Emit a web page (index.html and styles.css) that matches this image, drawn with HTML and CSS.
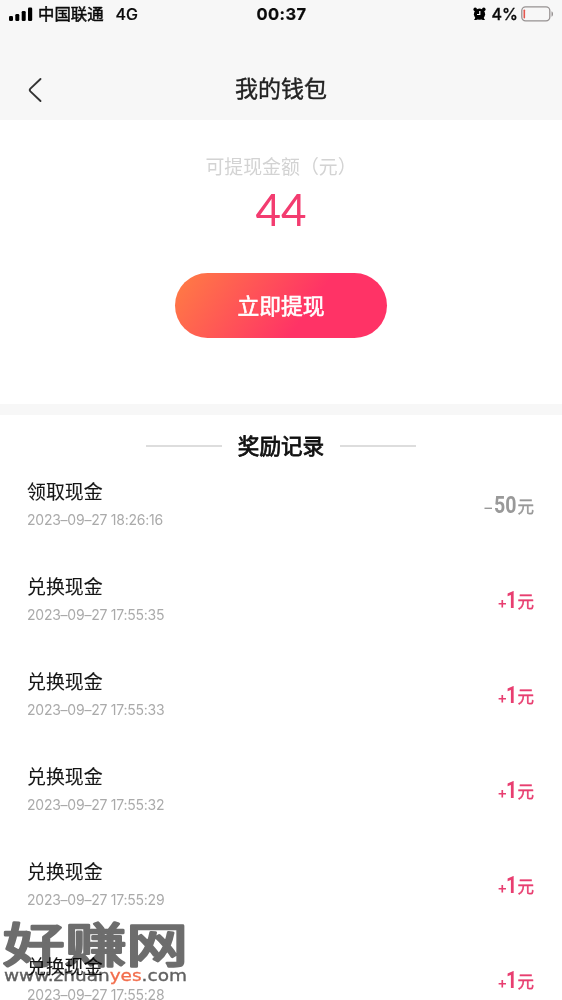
FILE: index.html
```html
<!DOCTYPE html>
<html lang="zh-CN">
<head>
<meta charset="utf-8">
<title>我的钱包</title>
<link rel="stylesheet" href="styles.css">
</head>
<body>
<div class="screen">
  <header class="top">
    <div class="status">
      <div class="carrier">
        <svg class="signal" width="24" height="14" viewBox="0 0 24 14"><rect x="0" y="9" width="4" height="5" rx="1.3"/><rect x="6.3" y="7" width="4" height="7" rx="1.3"/><rect x="12.7" y="4" width="4" height="10" rx="1.3"/><rect x="19" y="0.5" width="4.2" height="13.5" rx="1.3"/></svg>
        <span class="operator">中国联通</span><span class="network">4G</span>
      </div>
      <span class="clock">00:37</span>
      <div class="power">
        <svg class="alarm" width="13" height="14" viewBox="0 0 13 14"><circle cx="6.5" cy="7.2" r="5.6"/><circle cx="2.2" cy="2.4" r="1.8"/><circle cx="10.8" cy="2.4" r="1.8"/><path d="M2.5 10.5 1 13h2.4l1.2-1zM10.5 10.5 12 13H9.6l-1.2-1z"/><path class="hands" d="M6.8 4v3.5H4"/></svg>
        <span class="percent">4%</span>
        <svg class="battery" width="33" height="16" viewBox="0 0 33 16"><rect class="shell" x=".8" y=".8" width="28" height="14" rx="3.8"/><rect class="charge" x="2.5" y="3.5" width="1.6" height="9" rx=".8"/><path class="cap" d="M30.5 5.2c2 .7 2 4.8 0 5.5z"/></svg>
      </div>
    </div>
    <nav class="nav">
      <svg class="back" width="14" height="26" viewBox="0 0 14 26"><path d="M12.5 2 2.4 11.6q-1.4 1.4 0 2.8L12.5 24"/></svg>
      <h1 class="title">我的钱包</h1>
    </nav>
  </header>
  <section class="balance">
    <div class="label">可提现金额（元）</div>
    <div class="amount">44</div>
    <button class="withdraw">立即提现</button>
  </section>
  <section class="records">
    <h2 class="heading">奖励记录</h2>
    <div class="row"><div class="info"><div class="name">领取现金</div><div class="time">2023–09–27 18:26:16</div></div><div class="money spent"><span class="sign">–</span><span class="value">50</span><span class="unit">元</span></div></div>
    <div class="row"><div class="info"><div class="name">兑换现金</div><div class="time">2023–09–27 17:55:35</div></div><div class="money"><span class="sign">+</span><span class="value">1</span><span class="unit">元</span></div></div>
    <div class="row"><div class="info"><div class="name">兑换现金</div><div class="time">2023–09–27 17:55:33</div></div><div class="money"><span class="sign">+</span><span class="value">1</span><span class="unit">元</span></div></div>
    <div class="row"><div class="info"><div class="name">兑换现金</div><div class="time">2023–09–27 17:55:32</div></div><div class="money"><span class="sign">+</span><span class="value">1</span><span class="unit">元</span></div></div>
    <div class="row"><div class="info"><div class="name">兑换现金</div><div class="time">2023–09–27 17:55:29</div></div><div class="money"><span class="sign">+</span><span class="value">1</span><span class="unit">元</span></div></div>
    <div class="row"><div class="info"><div class="name">兑换现金</div><div class="time">2023–09–27 17:55:28</div></div><div class="money"><span class="sign">+</span><span class="value">1</span><span class="unit">元</span></div></div>
  </section>
  <svg class="watermark" width="192" height="80" viewBox="0 0 192 80">
    <text class="brand" transform="translate(3 52) scale(1 .76)" textLength="185" lengthAdjust="spacingAndGlyphs">好赚网</text>
    <text class="site" x="4" y="71" textLength="183" lengthAdjust="spacingAndGlyphs">www.zhuan<tspan class="accent">yes</tspan>.com</text>
  </svg>
</div>
</body>
</html>
```
FILE: styles.css
```css
* { box-sizing: border-box; }
body { margin: 0; background: #fff; font-family: Inter, "Noto Sans CJK SC", sans-serif; }
.screen { position: relative; width: 562px; height: 1000px; overflow: hidden; background: #fff; }
.top { height: 120px; background: #f7f7f7; }
.status { display: grid; grid-template-columns: 1fr auto 1fr; align-items: center; height: 28px; padding: 0 8px 0 9px; color: #0b0b0b; font-size: 16px; line-height: 28px; }
.carrier { display: flex; align-items: center; }
.operator { margin-left: 5px; font-size: 16.4px; -webkit-text-stroke: .5px; }
.network { margin-left: 12px; font-weight: 500; -webkit-text-stroke: .2px; }
.clock { font-weight: 700; font-size: 16.5px; letter-spacing: .35px; -webkit-text-stroke: .2px; }
.power { display: flex; justify-content: flex-end; align-items: center; }
.percent { margin: 0 3px 0 6px; font-weight: 500; font-size: 16px; -webkit-text-stroke: .3px; }
.hands { fill: none; stroke: #fff; stroke-width: 1.2; }
.shell { fill: none; stroke: #979292; stroke-width: 1.3; }
.charge { fill: #e4574f; }
.cap { fill: #979292; }
.nav { display: grid; grid-template-columns: 54px 1fr 54px; align-items: center; height: 92px; padding-top: 31px; }
.back { margin-left: 28px; fill: none; stroke: #333; stroke-width: 1.9; stroke-linecap: round; }
.title { margin: 0; padding-bottom: 2px; text-align: center; font-size: 23px; line-height: 58px; font-weight: 400; color: #222; -webkit-text-stroke: .4px; }
.balance { display: flex; flex-direction: column; align-items: center; height: 295px; padding-top: 36px; border-bottom: 11px solid #f7f7f7; }
.label { font-size: 18.9px; line-height: 24px; color: #d3d3d3; }
.amount { margin-top: 4px; font-family: Lato, sans-serif; font-size: 44px; line-height: 50px; color: #f33c70; }
.withdraw { width: 212px; height: 65px; margin-top: 39px; padding: 0 0 1px; border: 0; border-radius: 33px; background: linear-gradient(125deg, #ff7846 5%, #ff3366 62%); color: #fff; font: 400 21.8px/64px "Noto Sans CJK SC", sans-serif; -webkit-text-stroke: .6px; }
.heading { display: flex; justify-content: center; align-items: center; gap: 16px; height: 62px; margin: 0; font-size: 21.6px; line-height: 60px; font-weight: 400; color: #111; -webkit-text-stroke: .8px; }
.heading::before, .heading::after { content: ""; width: 76px; height: 2px; background: #ddd; }
.row { display: flex; justify-content: space-between; height: 95px; padding: 2px 28px 0 27px; }
.name { font-size: 18.9px; line-height: 28px; color: #151515; -webkit-text-stroke: .1px; }
.time { margin-top: 2px; font-size: 14px; letter-spacing: -.24px; line-height: 22px; color: #aaa; }
.money { display: flex; align-items: baseline; height: 40px; margin-top: 11px; color: #e83e70; line-height: 32px; }
.spent { color: #999; }
.sign { font-size: 15px; font-weight: 600; }
.spent .sign { font-weight: 500; }
.value { margin: 0 0 0 -3px; font: 700 23px/32px Roboto, sans-serif; transform: scaleX(.85); transform-origin: right; }
.spent .value { margin: 0 1px 0 -2px; }
.unit { font-size: 16.5px; -webkit-text-stroke: .4px; }
.watermark { position: absolute; left: 0; top: 910px; mix-blend-mode: multiply; }
.brand { font: 400 62px "Noto Sans CJK SC", sans-serif; fill: #6d6d6d; stroke: #6d6d6d; stroke-width: 3.4; stroke-linejoin: round; }
.site { font: 15px "DejaVu Sans", sans-serif; fill: #606060; stroke: #606060; stroke-width: .3; }
.accent { fill: #f26d4c; stroke: #f26d4c; }
```
